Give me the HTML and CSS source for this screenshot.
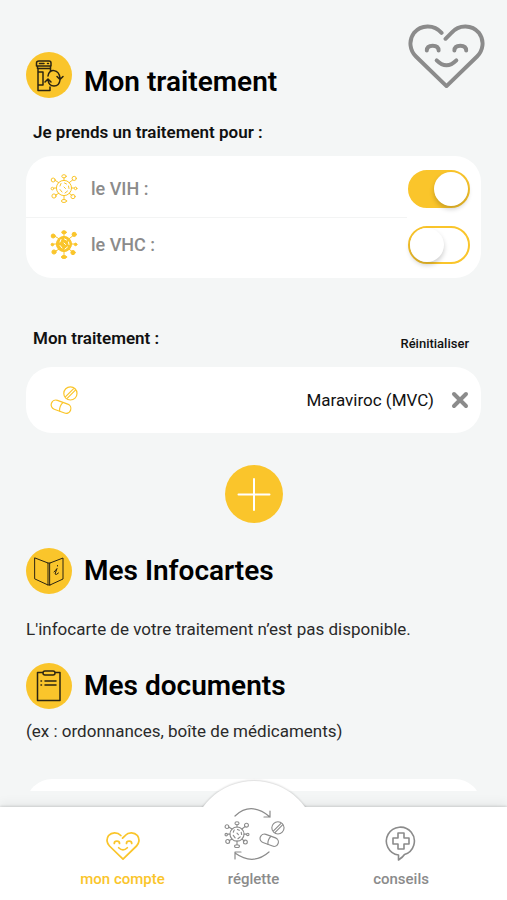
FILE: index.html
```html
<!DOCTYPE html>
<html lang="fr">
<head>
<meta charset="utf-8">
<meta name="viewport" content="width=device-width, initial-scale=1">
<title>Mon compte</title>
<link rel="stylesheet" href="styles.css">
</head>
<body>
<svg class="sprite" aria-hidden="true">
  <symbol id="heart" viewBox="0 0 78 66">
    <path d="M34 9C26 0 13 1 6 9C0 17 2 27 8 33L39 63L70 33C76 27 78 17 72 9C65 1 52 0 44 9L38 15"/>
    <path d="M19 27Q19 22 25 22Q31 22 31 27M47 27Q47 22 53 22Q59 22 59 27M29 37Q39 47 49 37"/>
  </symbol>
  <symbol id="virus" viewBox="0 0 28 30">
    <circle class="core" cx="14" cy="14" r="7.6"/>
    <path d="M14 6.4V3.8M14 21.6V25.4M6.4 14H4M21.6 14H24M8.7 8.6L5 6.3M19.3 8.6L22.6 6M8.7 19.4L5.4 21.2M19.3 19.4L22 21.4"/>
    <g class="tips">
      <ellipse cx="14" cy="2.3" rx="2.2" ry="1.6"/><ellipse cx="14" cy="27" rx="2.6" ry="1.5"/>
      <circle cx="2.4" cy="14.6" r="1.3"/><circle cx="25.6" cy="14.4" r="1.3"/>
      <circle cx="3.2" cy="6" r="2"/><circle cx="24.2" cy="4.4" r="2.1"/>
      <circle cx="4" cy="22" r="2.1"/><circle cx="23" cy="22.6" r="2.1"/>
    </g>
    <path class="marks" d="M11 9.5L10 12M14.5 9L16.500 10M18.5 12L19 14.5M10 15.5L12 18M14 13L15.5 14.5M17.5 17L15 19"/>
  </symbol>
  <symbol id="pills" viewBox="0 0 28 28">
    <circle cx="20.4" cy="7.4" r="6.6"/>
    <path d="M15.6 10.600L23.4 2.800M17.400 12.200L25.400 4.200"/>
    <rect x=".8" y="16" width="20.4" height="9.4" rx="4.7" transform="rotate(20 11 20.7)"/>
    <path d="M12.8 16.6Q9.2 20.2 9.6 25"/>
  </symbol>
</svg>

<main class="content">
  <svg class="mascot" aria-hidden="true"><use href="#heart"/></svg>

  <header class="title title-first">
    <span class="badge">
      <svg viewBox="0 0 46 46" aria-hidden="true">
        <path d="M13 9H23Q25 9 25 11V14H10.500V11Q10.500 9 13 9ZM11.500 14V16.500H24.500V14M12 16.500V38.500H24V35M24.500 16.500V19M12 20H17V33H12M13.500 11.500H18M21.500 11.500H22.500"/>
        <path d="M22 24C23 16 33 17 34 26M31 24.500L34 27.500L37 24.500M34 28C33 36 23 36 22 28M19 30L22 27L25 30"/>
      </svg>
    </span>
    <h1>Mon traitement</h1>
  </header>

  <h2 class="label">Je prends un traitement pour :</h2>
  <section class="card">
    <div class="row">
      <svg class="row-icon virus-line" aria-hidden="true"><use href="#virus"/></svg>
      <label for="vih">le VIH :</label>
      <input class="switch" type="checkbox" id="vih" checked>
    </div>
    <div class="row">
      <svg class="row-icon virus-solid" aria-hidden="true"><use href="#virus"/></svg>
      <label for="vhc">le VHC :</label>
      <input class="switch" type="checkbox" id="vhc">
    </div>
  </section>

  <div class="label-row">
    <h2 class="label">Mon traitement :</h2>
    <button class="reset" type="button">Réinitialiser</button>
  </div>
  <section class="card drug">
    <svg class="row-icon pills" aria-hidden="true"><use href="#pills"/></svg>
    <span class="drug-name">Maraviroc (MVC)</span>
    <button class="remove" type="button" aria-label="Supprimer">
      <svg viewBox="0 0 18 18" aria-hidden="true"><path d="M3 3L15 15M15 3L3 15"/></svg>
    </button>
  </section>

  <button class="add" type="button" aria-label="Ajouter">
    <svg viewBox="0 0 58 58" aria-hidden="true"><path d="M29 14V45M13.500 29.500H44.500"/></svg>
  </button>

  <header class="title">
    <span class="badge">
      <svg class="fine" viewBox="0 0 46 46" aria-hidden="true">
        <path d="M9 10L22 15V37L9 31ZM24 15L37 10V31L24 37ZM22 15H24M22 37H24"/>
        <path d="M28 24Q30 22 31 20.500L29 26Q30 27.500 32.500 25M31.500 17.500V18"/>
      </svg>
    </span>
    <h1>Mes Infocartes</h1>
  </header>
  <p class="text">L'infocarte de votre traitement n’est pas disponible.</p>

  <header class="title">
    <span class="badge">
      <svg viewBox="0 0 46 46" aria-hidden="true">
        <path d="M17 9.500H11.500V37.500H34V9.500H29M19 8H27Q29 8 29 10T27 12H19Q17 12 17 10T19 8ZM19 18H30M19 22H30M15 18H15.500M15 22H15.500"/>
      </svg>
    </span>
    <h1>Mes documents</h1>
  </header>
  <p class="text text-note">(ex : ordonnances, boîte de médicaments)</p>
  <section class="card documents"></section>
</main>

<nav class="tabs">
  <a class="tab active" href="#compte">
    <svg class="tab-heart" aria-hidden="true"><use href="#heart"/></svg>
    <span>mon compte</span>
  </a>
  <a class="tab tab-main" href="#reglette">
    <svg class="cycle" viewBox="0 0 62 54" aria-hidden="true">
      <path class="arrow" d="M12 9Q28 -6 47 10M41 10H47V4M46 45Q30 59 12 46M12 52V45H18"/>
      <use href="#virus" x="1" y="14" width="26" height="28"/>
      <use href="#pills" x="36" y="14" width="26" height="26"/>
    </svg>
    <span>réglette</span>
  </a>
  <a class="tab" href="#conseils">
    <svg class="bubble" viewBox="0 0 32 36" aria-hidden="true">
      <path d="M13.500 35V30A14 14 0 1 1 19.500 29.500Q18 32 13.500 35Z"/>
      <path d="M13 8H19V13H24V19H19V24H13V19H8V13H13Z"/>
    </svg>
    <span>conseils</span>
  </a>
</nav>
</body>
</html>
```

FILE: styles.css
```css
:root {
  --yellow: #fac52b;
  --grey: #8b8b8b;
  --bg: #f4f6f6;
}

* { box-sizing: border-box; }

body {
  margin: 0;
  height: 100vh;
  display: flex;
  flex-direction: column;
  overflow: hidden;
  background: var(--bg);
  color: #111;
  font-family: Roboto, "Liberation Sans", sans-serif;
}

h1, h2, p { margin: 0; }

button {
  padding: 0;
  border: 0;
  background: none;
  color: inherit;
  font: inherit;
  cursor: pointer;
}

svg {
  display: block;
  flex: none;
  fill: none;
  stroke: currentColor;
  stroke-linecap: round;
  stroke-linejoin: round;
}

.sprite { position: absolute; width: 0; height: 0; }

.content {
  position: relative;
  flex: 1;
  min-height: 0;
  overflow: hidden;
  padding: 52px 26px 0;
}

.mascot {
  position: absolute;
  top: 24px;
  right: 22px;
  width: 77px;
  height: 65px;
  color: var(--grey);
  stroke-width: 4;
}

.title {
  display: flex;
  align-items: center;
  gap: 12px;
  height: 46px;
  margin-top: 22px;
}

.title-first { margin-top: 0; }
.title-first h1 { padding-top: 14px; }

.title h1 {
  font-size: 28px;
  line-height: 36px;
  font-weight: 600;
  color: #000;
}

.badge {
  width: 46px;
  height: 46px;
  border-radius: 50%;
  background: var(--yellow);
}

.badge svg { stroke: #2b2412; stroke-width: 1.5; }
.badge .fine { stroke-width: 1; }

.label {
  font-size: 17px;
  line-height: 24px;
  font-weight: 600;
}

.title + .label { margin: 22px 7px 12px; }

.card {
  background: #fff;
  border-radius: 26px;
}

.row {
  display: flex;
  align-items: center;
  height: 61px;
  padding: 4px 11px 0 24px;
  color: var(--grey);
  font-size: 18px;
}

.row + .row {
  padding-top: 0;
  padding-bottom: 6px;
  background: linear-gradient(#f3f4f4, #f3f4f4) 0 0 / calc(100% - 74px) 1px no-repeat;
}

.row label { flex: 1; margin-left: 13px; font-weight: 500; }

.row-icon { width: 28px; height: 30px; color: var(--yellow); stroke-width: 1; }
.pills { stroke-width: 1.2; }
.virus-solid { fill: currentColor; --mark: #fff; }

.marks { fill: none; stroke: var(--mark, currentColor); }

.switch {
  appearance: none;
  width: 62px;
  height: 38px;
  margin: 0;
  border: 2px solid var(--yellow);
  border-radius: 19px;
  background: #fff;
  cursor: pointer;
}

.switch::before {
  content: "";
  display: block;
  width: 34px;
  height: 34px;
  border-radius: 50%;
  background: #fff;
  box-shadow: 0 3px 5px rgba(0, 0, 0, .2);
}

.switch:checked { background: var(--yellow); }
.switch:checked::before { margin-left: auto; }

.label-row {
  display: flex;
  justify-content: space-between;
  margin: 48px 12px 17px 7px;
}

.reset { margin-top: 12px; font-size: 13px; line-height: 12px; font-weight: 500; }

.drug {
  display: flex;
  align-items: center;
  height: 66px;
  padding: 0 12px 0 24px;
}

.drug-name {
  flex: 1;
  margin-right: 17px;
  text-align: right;
  font-size: 17px;
}

.remove { color: var(--grey); }
.remove svg { width: 18px; height: 18px; stroke-width: 4; }

.add {
  display: block;
  width: 58px;
  height: 58px;
  margin: 32px auto 25px;
  border-radius: 50%;
  background: var(--yellow);
}

.add svg { stroke: #fff; stroke-width: 2; }

.text {
  margin-top: 23px;
  color: #2a2a2a;
  font-size: 17px;
  line-height: 24px;
}

.text-note { margin-top: 10px; }

.documents { height: 60px; margin-top: 36px; }

.tabs {
  position: relative;
  display: grid;
  grid-template-columns: 4fr 4fr 5fr;
  height: 93px;
  margin-top: 16px;
  padding: 0 24px 0 57px;
  background: #fff;
  box-shadow: 0 -1px 2px rgba(0, 0, 0, .12), 0 -4px 10px rgba(0, 0, 0, .06);
}

.tab {
  position: relative;
  display: flex;
  flex-direction: column;
  align-items: center;
  justify-content: flex-end;
  gap: 8px;
  padding-bottom: 11px;
  color: var(--grey);
  font-size: 15px;
  line-height: 20px;
  font-weight: 500;
  text-decoration: none;
}

.tab span, .cycle { position: relative; }
.active { color: var(--yellow); }
.tab-heart { width: 34px; height: 30px; stroke-width: 4; }
.bubble { width: 32px; height: 36px; stroke-width: 1.6; }
.cycle { width: 62px; height: 54px; stroke-width: 1.2; }

/* Raised dome behind the central tab */
.tab-main::before {
  content: "";
  position: absolute;
  top: -26px;
  left: 50%;
  width: 126px;
  height: 126px;
  margin-left: -63px;
  border-radius: 50%;
  background: #fff;
  box-shadow: 0 -1px 2px rgba(0, 0, 0, .15);
  clip-path: inset(-8px -8px 100px -8px);
}
```
